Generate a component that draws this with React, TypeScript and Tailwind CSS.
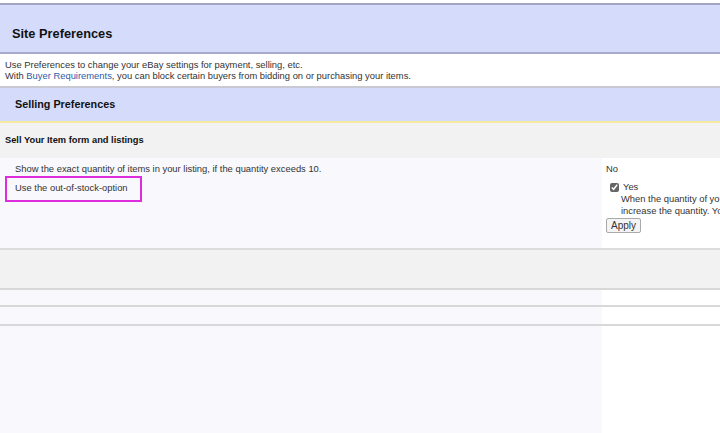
import React from "react";

const font = { fontFamily: '"Liberation Sans", Arial, sans-serif' };

const App: React.FC = () => {
  return (
    <div className="w-[720px] h-[433px] overflow-hidden bg-white text-[#333]" style={font}>
      {/* page title */}
      <div className="mt-[3px] h-[51px] border-t-2 border-b-2 border-t-[#a4a4c2] border-b-[#a9a9c9] bg-[#d5dcfb] flex items-end pb-[11px] pl-[12px]">
        <h1 className="text-[12.8px] font-bold text-[#111] leading-none">Site Preferences</h1>
      </div>

      <div className="h-[32px] pl-[5px] pt-[5px] text-[9.4px] leading-[11px] text-[#333]">
        <p>Use Preferences to change your eBay settings for payment, selling, etc.</p>
        <p>
          With <a className="text-[#2d5aa8]">Buyer Requirements</a>, you can block certain buyers from bidding on or
          purchasing your items.
        </p>
      </div>

      {/* selling prefs header */}
      <div className="h-[37px] border-t-2 border-b-2 border-t-[#c9c9d4] border-b-[#f5eaa2] bg-[#d5dcfb] flex items-center pl-[15px]">
        <h2 className="text-[10.8px] font-bold text-[#111]">Selling Preferences</h2>
      </div>

      <div className="h-[35px] bg-[#f2f2f2] flex items-center pl-[5px]">
        <h3 className="text-[9.3px] font-bold text-[#111]">Sell Your Item form and listings</h3>
      </div>

      {/* options */}
      <div className="flex h-[92px] border-b-2 border-[#dcdcdc] text-[9.4px]">
        <div className="w-[602px] shrink-0 bg-[#f8f8fd] pt-[4px]">
          <div className="pl-[15px] leading-[14px] whitespace-nowrap">
            Show the exact quantity of items in your listing, if the quantity exceeds 10.
          </div>
          <div className="ml-[5px] w-[137px] h-[26px] border-2 border-[#dd2ddd] pl-[8px] pt-[3px] leading-[14px] whitespace-nowrap">
            Use the out-of-stock-option
          </div>
        </div>
        <div className="flex-1 min-w-0 bg-white pl-[4px] pt-[4px] whitespace-nowrap">
          <div className="leading-[14px]">No</div>
          <div className="mt-[5px] flex items-center pl-[4px] leading-[12px]">
            <input type="checkbox" defaultChecked className="w-[9px] h-[9px] m-0 accent-[#666]" />
            <span className="ml-[4px]">Yes</span>
          </div>
          <div className="pl-[15px] leading-[12px]">
            <div>When the quantity of your item reaches zero, the listing stays active but is hidden from search until you</div>
            <div>increase the quantity. Your listing keeps its sales history.</div>
          </div>
          <button className="mt-[1px] h-[15px] px-[4px] border border-[#aaa] bg-[#f4f4f4] text-[10px] leading-[12px] rounded-[2px]">
            Apply
          </button>
        </div>
      </div>

      <div className="h-[40px] bg-[#f2f2f2] border-b-2 border-[#d8d8d8]" />
      <div className="flex h-[17px] border-b-2 border-[#d8d8d8]">
        <div className="w-[602px] shrink-0 bg-[#f8f8fd]" />
        <div className="flex-1 bg-white" />
      </div>
      <div className="flex h-[19px] border-b-2 border-[#d8d8d8]">
        <div className="w-[602px] shrink-0 bg-[#f8f8fd]" />
        <div className="flex-1 bg-white" />
      </div>
      <div className="flex h-[120px]">
        <div className="w-[602px] shrink-0 bg-[#f8f8fd]" />
        <div className="flex-1 bg-white" />
      </div>
    </div>
  );
};

export default App;
